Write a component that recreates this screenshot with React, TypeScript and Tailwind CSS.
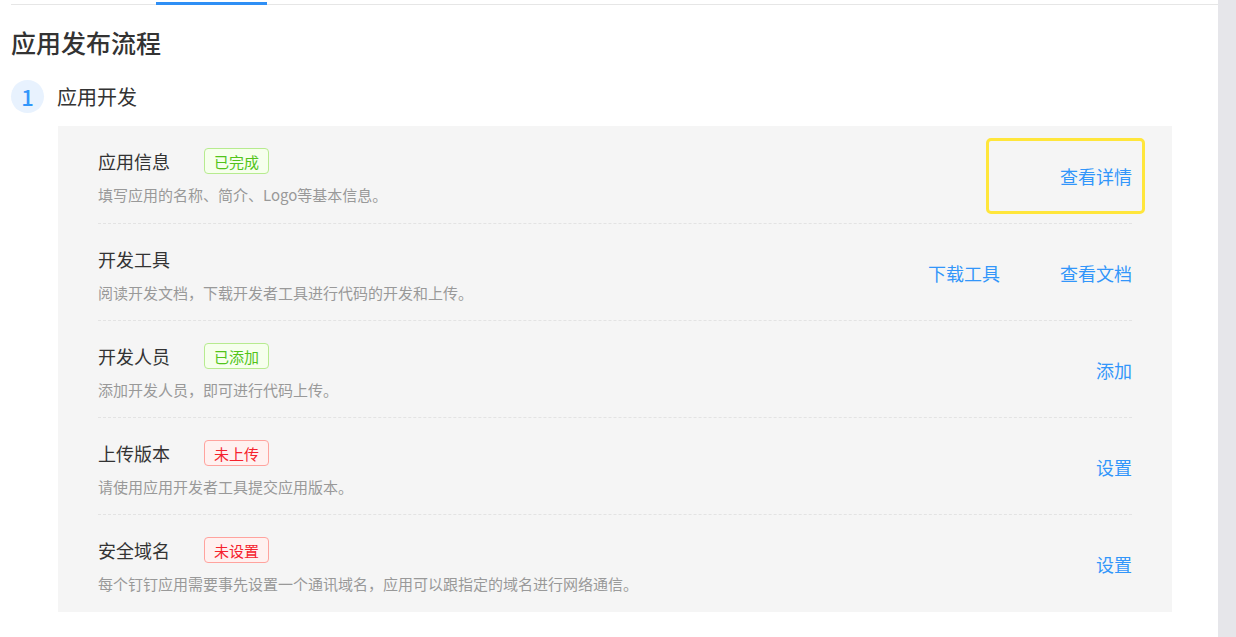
type Tag = { text: string; tone: "green" | "red" };

type Step = {
  title: string;
  desc: string;
  tag?: Tag;
  actions: string[];
  focused?: boolean;
};

const steps: Step[] = [
  {
    title: "应用信息",
    desc: "填写应用的名称、简介、Logo等基本信息。",
    tag: { text: "已完成", tone: "green" },
    actions: ["查看详情"],
    focused: true,
  },
  {
    title: "开发工具",
    desc: "阅读开发文档，下载开发者工具进行代码的开发和上传。",
    actions: ["下载工具", "查看文档"],
  },
  {
    title: "开发人员",
    desc: "添加开发人员，即可进行代码上传。",
    tag: { text: "已添加", tone: "green" },
    actions: ["添加"],
  },
  {
    title: "上传版本",
    desc: "请使用应用开发者工具提交应用版本。",
    tag: { text: "未上传", tone: "red" },
    actions: ["设置"],
  },
  {
    title: "安全域名",
    desc: "每个钉钉应用需要事先设置一个通讯域名，应用可以跟指定的域名进行网络通信。",
    tag: { text: "未设置", tone: "red" },
    actions: ["设置"],
  },
];

function StatusTag({ tag }: { tag: Tag }) {
  const cls =
    tag.tone === "green"
      ? "border-[#b7eb8f] bg-[#f6ffed] text-[#52c41a]"
      : "border-[#ffa39e] bg-[#fff1f0] text-[#f5222d]";
  return (
    <span
      className={`ml-[34px] inline-flex h-[26px] items-center rounded-[4px] border px-[9px] text-[15px] leading-none ${cls}`}>
      {tag.text}
    </span>
  );
}

function StepRow({ step, first }: { step: Step; first: boolean }) {
  return (
    <div
      className={`flex h-[97px] justify-between ${first ? "" : "border-t border-dashed border-[#e3e3e3]"}`}>
      <div className="pt-[22px]">
        <div className="flex h-[26px] items-center">
          <span className="text-[18px] leading-none text-[#333]">{step.title}</span>
          {step.tag && <StatusTag tag={step.tag} />}
        </div>
        <p className="mt-[11px] text-[15px] leading-[20px] text-[#999]">{step.desc}</p>
      </div>
      <div className="flex items-center gap-[60px] self-center pt-[2px]">
        {step.actions.map((a) => (
          <a
            key={a}
            href="#"
            className="relative text-[18px] leading-[24px] text-[#3296fa]">
            {a}
            {step.focused && (
              <span className="pointer-events-none absolute -top-[26px] -bottom-[26px] -left-[74px] -right-[13px] rounded-[5px] border-[3px] border-[#ffe63b]" />
            )}
          </a>
        ))}
      </div>
    </div>
  );
}

export default function App() {
  return (
    <div className="flex h-[637px] overflow-hidden bg-white font-['Noto_Sans_CJK_SC',sans-serif]">
      <div className="flex-1 pl-[11px]">
        <div className="flex h-[5px] items-end border-b border-[#e6e6e6]">
          <div className="mb-[-1px] ml-[145px] h-[3px] w-[111px] bg-[#2f8ff5]" />
        </div>

        <h1 className="mt-[19px] h-[36px] text-[25px] font-medium leading-[36px] text-[#333]">
          应用发布流程
        </h1>

        <div className="mt-[20px] flex items-center gap-[13px]">
          <div className="flex h-[33px] w-[33px] items-center justify-center rounded-full bg-[#e8f2fe] text-[22px] font-medium text-[#3296fa]">
            1
          </div>
          <span className="text-[20px] leading-none text-[#333]">应用开发</span>
        </div>

        <div className="mt-[13px] ml-[47px] mr-[46px] bg-[#f5f5f5] px-[40px] pb-[1px]">
          {steps.map((s, i) => (
            <StepRow key={s.title} step={s} first={i === 0} />
          ))}
        </div>
      </div>
      <div className="w-[18px] bg-[#e6e6ea]" />
    </div>
  );
}
